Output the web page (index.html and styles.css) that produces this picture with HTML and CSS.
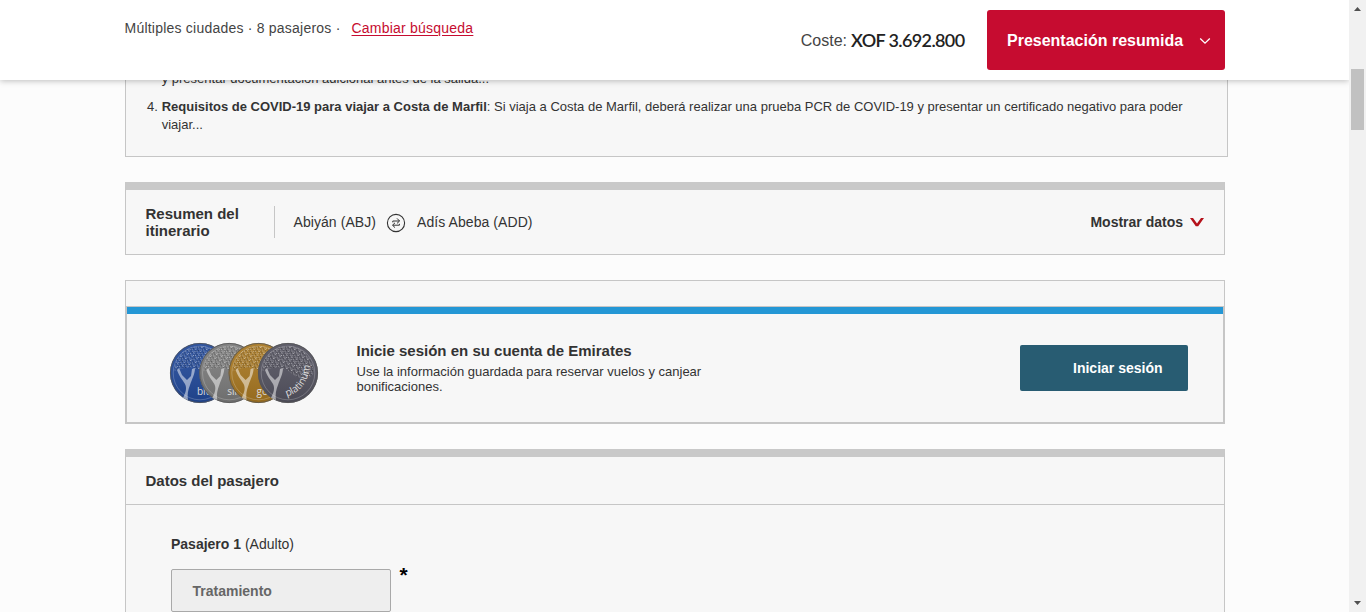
FILE: index.html
```html
<!DOCTYPE html>
<html lang="es">
<head>
<meta charset="utf-8">
<title>Datos del pasajero</title>
<link rel="stylesheet" href="styles.css">
</head>
<body>
<div class="window">
  <div class="page">
    <header class="topbar">
      <div class="trip"><span class="trip-info">Múltiples ciudades · 8 pasajeros ·</span><a class="change" href="#">Cambiar búsqueda</a></div>
      <div class="cost"><span class="cost-label">Coste:</span><span class="cost-value">XOF 3.692.800</span></div>
      <button class="summary"><span>Presentación resumida</span>
        <svg width="12" height="8" viewBox="0 0 12 8"><path d="M1.2 1.5 6 6.2 10.8 1.5" fill="none" stroke="#fff" stroke-width="1.3"/></svg>
      </button>
    </header>
    <main class="content">
      <section class="notice">
        <p class="notice-item"><span></span><span class="notice-prev">y presentar documentación adicional antes de la salida...</span></p>
        <p class="notice-item"><span>4.</span><span class="notice-text"><b>Requisitos de COVID-19 para viajar a Costa de Marfil</b>: Si viaja a Costa de Marfil, deberá realizar una prueba PCR de COVID-19 y presentar un certificado negativo para poder<br>viajar...</span></p>
      </section>
      <section class="panel itinerary">
        <h2 class="itinerary-title">Resumen del<br>itinerario</h2>
        <div class="route">
          <span class="from">Abiyán (ABJ)</span>
          <svg class="swap" width="20" height="20" viewBox="0 0 20 20" fill="none" stroke="#333"><circle cx="10" cy="10" r="8.6" stroke-width="1.1"/><path d="M6.8 9.4V8H13.4M11 5.4 13.6 8 11 10.4M13.4 10.8V12.2H6.8M9 9.8 6.5 12.2 9 14.6" stroke-width="1"/></svg>
          <span class="to">Adís Abeba (ADD)</span>
        </div>
        <div class="show"><span>Mostrar datos</span>
          <svg width="14" height="9" viewBox="0 0 14 9"><path d="M0 0H3L7 5.4 11 0H14L8.2 8.2H5.8Z" fill="#b5121b"/></svg>
        </div>
      </section>
      <section class="login">
        <div class="login-card">
          <svg class="coins" width="150" height="62" viewBox="0 0 150 62">
            <defs>
              <pattern id="leaves" width="5.3" height="4.1" patternUnits="userSpaceOnUse" patternTransform="rotate(23)"><path d="M0 .6 1.6 .2M2.6 1.6 3.9 2.4M.6 3.1 1.8 2.6M4 3.8 5 3.3" stroke="#f4f4f4" stroke-width=".7" fill="none"/><path d="M1 1.5 2.1 1.9M3.4 .8 4.6 .4M2.4 3.5 3.2 3.2" stroke="#181818" stroke-width=".6"/></pattern>
              <linearGradient id="shade" x1="0" y1="0" x2="0" y2="1"><stop offset="0" stop-color="#fff" stop-opacity=".06"/><stop offset="1" stop-color="#000" stop-opacity=".12"/></linearGradient>
              <g id="tree">
                <circle r="29.6" cx="31" cy="31" fill="url(#shade)" stroke="#555" stroke-width=".8"/>
                <circle r="26.8" cx="31" cy="31" fill="none" stroke="#fff" stroke-opacity=".35" stroke-width=".6"/>
                <path d="M5 29C6 13 18 4 31 4S55 14 57 29C55 38 45 40 34 31 26 24 15 25 5 29Z" fill="url(#leaves)" opacity=".7"/>
                <path d="M14 56C17 50 18 46 16 42 13 37 10 34 8 28L10 26 13 33 18 38 22 34 23 27 26 26C26 32 23 37 21 43 19 48 18 53 19 58Z" fill="#fff" opacity=".5"/>
              </g>
              <path id="arc" d="M29.5 54.5Q50 49 53 24"/>
            </defs>
            <g><circle cx="31" cy="31" r="30" fill="#234a9a"/><use href="#tree"/><text class="coin-label" x="28" y="53">blue</text></g>
            <g transform="translate(29.3)"><circle cx="31" cy="31" r="30" fill="#7c7c7c"/><use href="#tree"/><text class="coin-label" x="29" y="53">silver</text></g>
            <g transform="translate(58.6)"><circle cx="31" cy="31" r="30" fill="#a87822"/><use href="#tree"/><text class="coin-label" x="29" y="53">gold</text></g>
            <g transform="translate(88)"><circle cx="31" cy="31" r="30" fill="#555461"/><use href="#tree"/><text class="coin-label"><textPath href="#arc">platinum</textPath></text></g>
          </svg>
          <div class="login-copy">
            <h2 class="login-title">Inicie sesión en su cuenta de Emirates</h2>
            <p class="login-text">Use la información guardada para reservar vuelos y canjear<br>bonificaciones.</p>
          </div>
          <button class="signin"><span>Iniciar sesión</span></button>
        </div>
      </section>
      <section class="panel passengers">
        <h2 class="passengers-title"><span>Datos del pasajero</span></h2>
        <div class="passenger">
          <p class="passenger-name"><b>Pasajero 1</b> <span>(Adulto)</span></p>
          <div class="field"><div class="select"><span>Tratamiento</span></div><span class="required">*</span></div>
        </div>
      </section>
    </main>
  </div>
  <div class="scrollbar">
    <svg width="7" height="4" viewBox="0 0 7 4"><path d="M0 4 3.5 0 7 4Z" fill="#505050"/></svg>
    <div class="thumb"></div>
    <svg class="down" width="7" height="4" viewBox="0 0 7 4"><path d="M0 0 3.5 4 7 0Z" fill="#505050"/></svg>
  </div>
</div>
</body>
</html>
```

FILE: styles.css
```css
* { box-sizing: border-box; }
body { margin: 0; background: #fcfcfc; color: #333; font-family: "Liberation Sans", Arial, sans-serif; font-size: 14px; overflow: hidden; }
h2, p { margin: 0; }
button { border: 0; color: #fff; font-family: inherit; font-weight: bold; }
svg { display: block; flex: none; }
span, b, a { white-space: nowrap; }
.window { display: flex; height: 612px; overflow: hidden; }
.page { flex: 1; min-width: 0; overflow: hidden; }

.topbar { position: relative; z-index: 1; display: flex; height: 80px; padding: 10px 124px; background: #fff; box-shadow: 0 1px 6px rgba(0,0,0,.25); }
.trip { flex: 1; display: flex; gap: 11px; padding: 10px 0 0 .5px; line-height: 16px; letter-spacing: .22px; color: #444; }
.change { color: #c60c30; text-underline-offset: 2px; }
.cost { display: flex; align-items: center; gap: 4px; margin-right: 22.5px; padding-top: 1px; font-size: 16px; color: #444; }
.cost-value { font-family: "Lato", sans-serif; font-size: 18px; line-height: 20px; letter-spacing: -.63px; color: #222; font-weight: 600; margin-top: -2px; }
.summary { width: 238px; height: 60px; display: flex; align-items: center; justify-content: space-between; padding: 2px 14px 0 20px; border-radius: 3px; background: #c60c30; font-size: 16px; }

.content { width: 1103px; margin-left: 125px; }
.notice { height: 88px; margin-top: -11px; padding: 1px 0 0 21px; border: 1px solid #c6c6c6; border-top: 0; background: #f7f7f7; font-size: 13px; line-height: 18px; }
.notice-item { display: grid; grid-template-columns: 14.7px 1fr; margin-bottom: 10px; }
.panel { width: 1100px; border: 1px solid #c6c6c6; border-top: 8px solid #c9c9c9; background: #f7f7f7; }
.itinerary { display: flex; align-items: center; height: 73px; margin-top: 25px; padding: 0 20px 0 19.5px; }
.itinerary-title { width: 129px; height: 32px; line-height: 16.5px; font-size: 15px; border-right: 1px solid #c6c6c6; }
.route { flex: 1; display: flex; align-items: center; padding-left: 19px; letter-spacing: .07px; }
.swap { margin: 2px 11.5px 0 9.5px; }
.show { display: flex; align-items: center; gap: 7px; font-weight: bold; }

.login { width: 1100px; height: 144px; margin-top: 25px; padding-top: 25px; border: 1px solid #c6c6c6; background: #f7f7f7; }
.login-card { height: 117px; display: flex; border: 1px solid #c6c6c6; padding-right: 35px; background: linear-gradient(#2497d5 7px, transparent 7px); }
.coins { margin: 35px 0 0 42px; }
.coin-label { font: 10px "Open Sans", sans-serif; fill: #ddd; }
.login-copy { flex: 1; padding: 35px 0 0 37.5px; }
.login-title { font-size: 15px; line-height: 18px; }
.login-text { font-size: 13px; line-height: 15px; margin-top: 4px; }
.signin { width: 168px; height: 46px; margin-top: 38px; padding: 0 25.5px 0 0; border-radius: 2px; background: #285c72; font-size: 14px; text-align: right; }

.passengers { height: 200px; margin-top: 25px; }
.passengers-title { height: 48px; padding-left: 19.5px; border-bottom: 1px solid #c6c6c6; font-size: 15px; line-height: 48px; }
.passenger { padding: 31px 0 0 45px; }
.passenger-name { line-height: 17px; }
.field { display: flex; gap: 8.5px; margin-top: 16px; }
.select { width: 220px; height: 43px; padding-left: 20.5px; border: 1px solid #a9a9a9; border-radius: 2px; background: #eee; color: #666; font-weight: bold; line-height: 42px; }
.required { color: #000; font-size: 21px; line-height: 12px; font-weight: bold; }

.scrollbar { width: 17px; background: #f1f1f1; display: flex; flex-direction: column; align-items: center; padding: 7px 0; }
.thumb { width: 13px; height: 61px; margin-top: 58px; background: #c1c1c1; }
.down { margin-top: auto; }
```
